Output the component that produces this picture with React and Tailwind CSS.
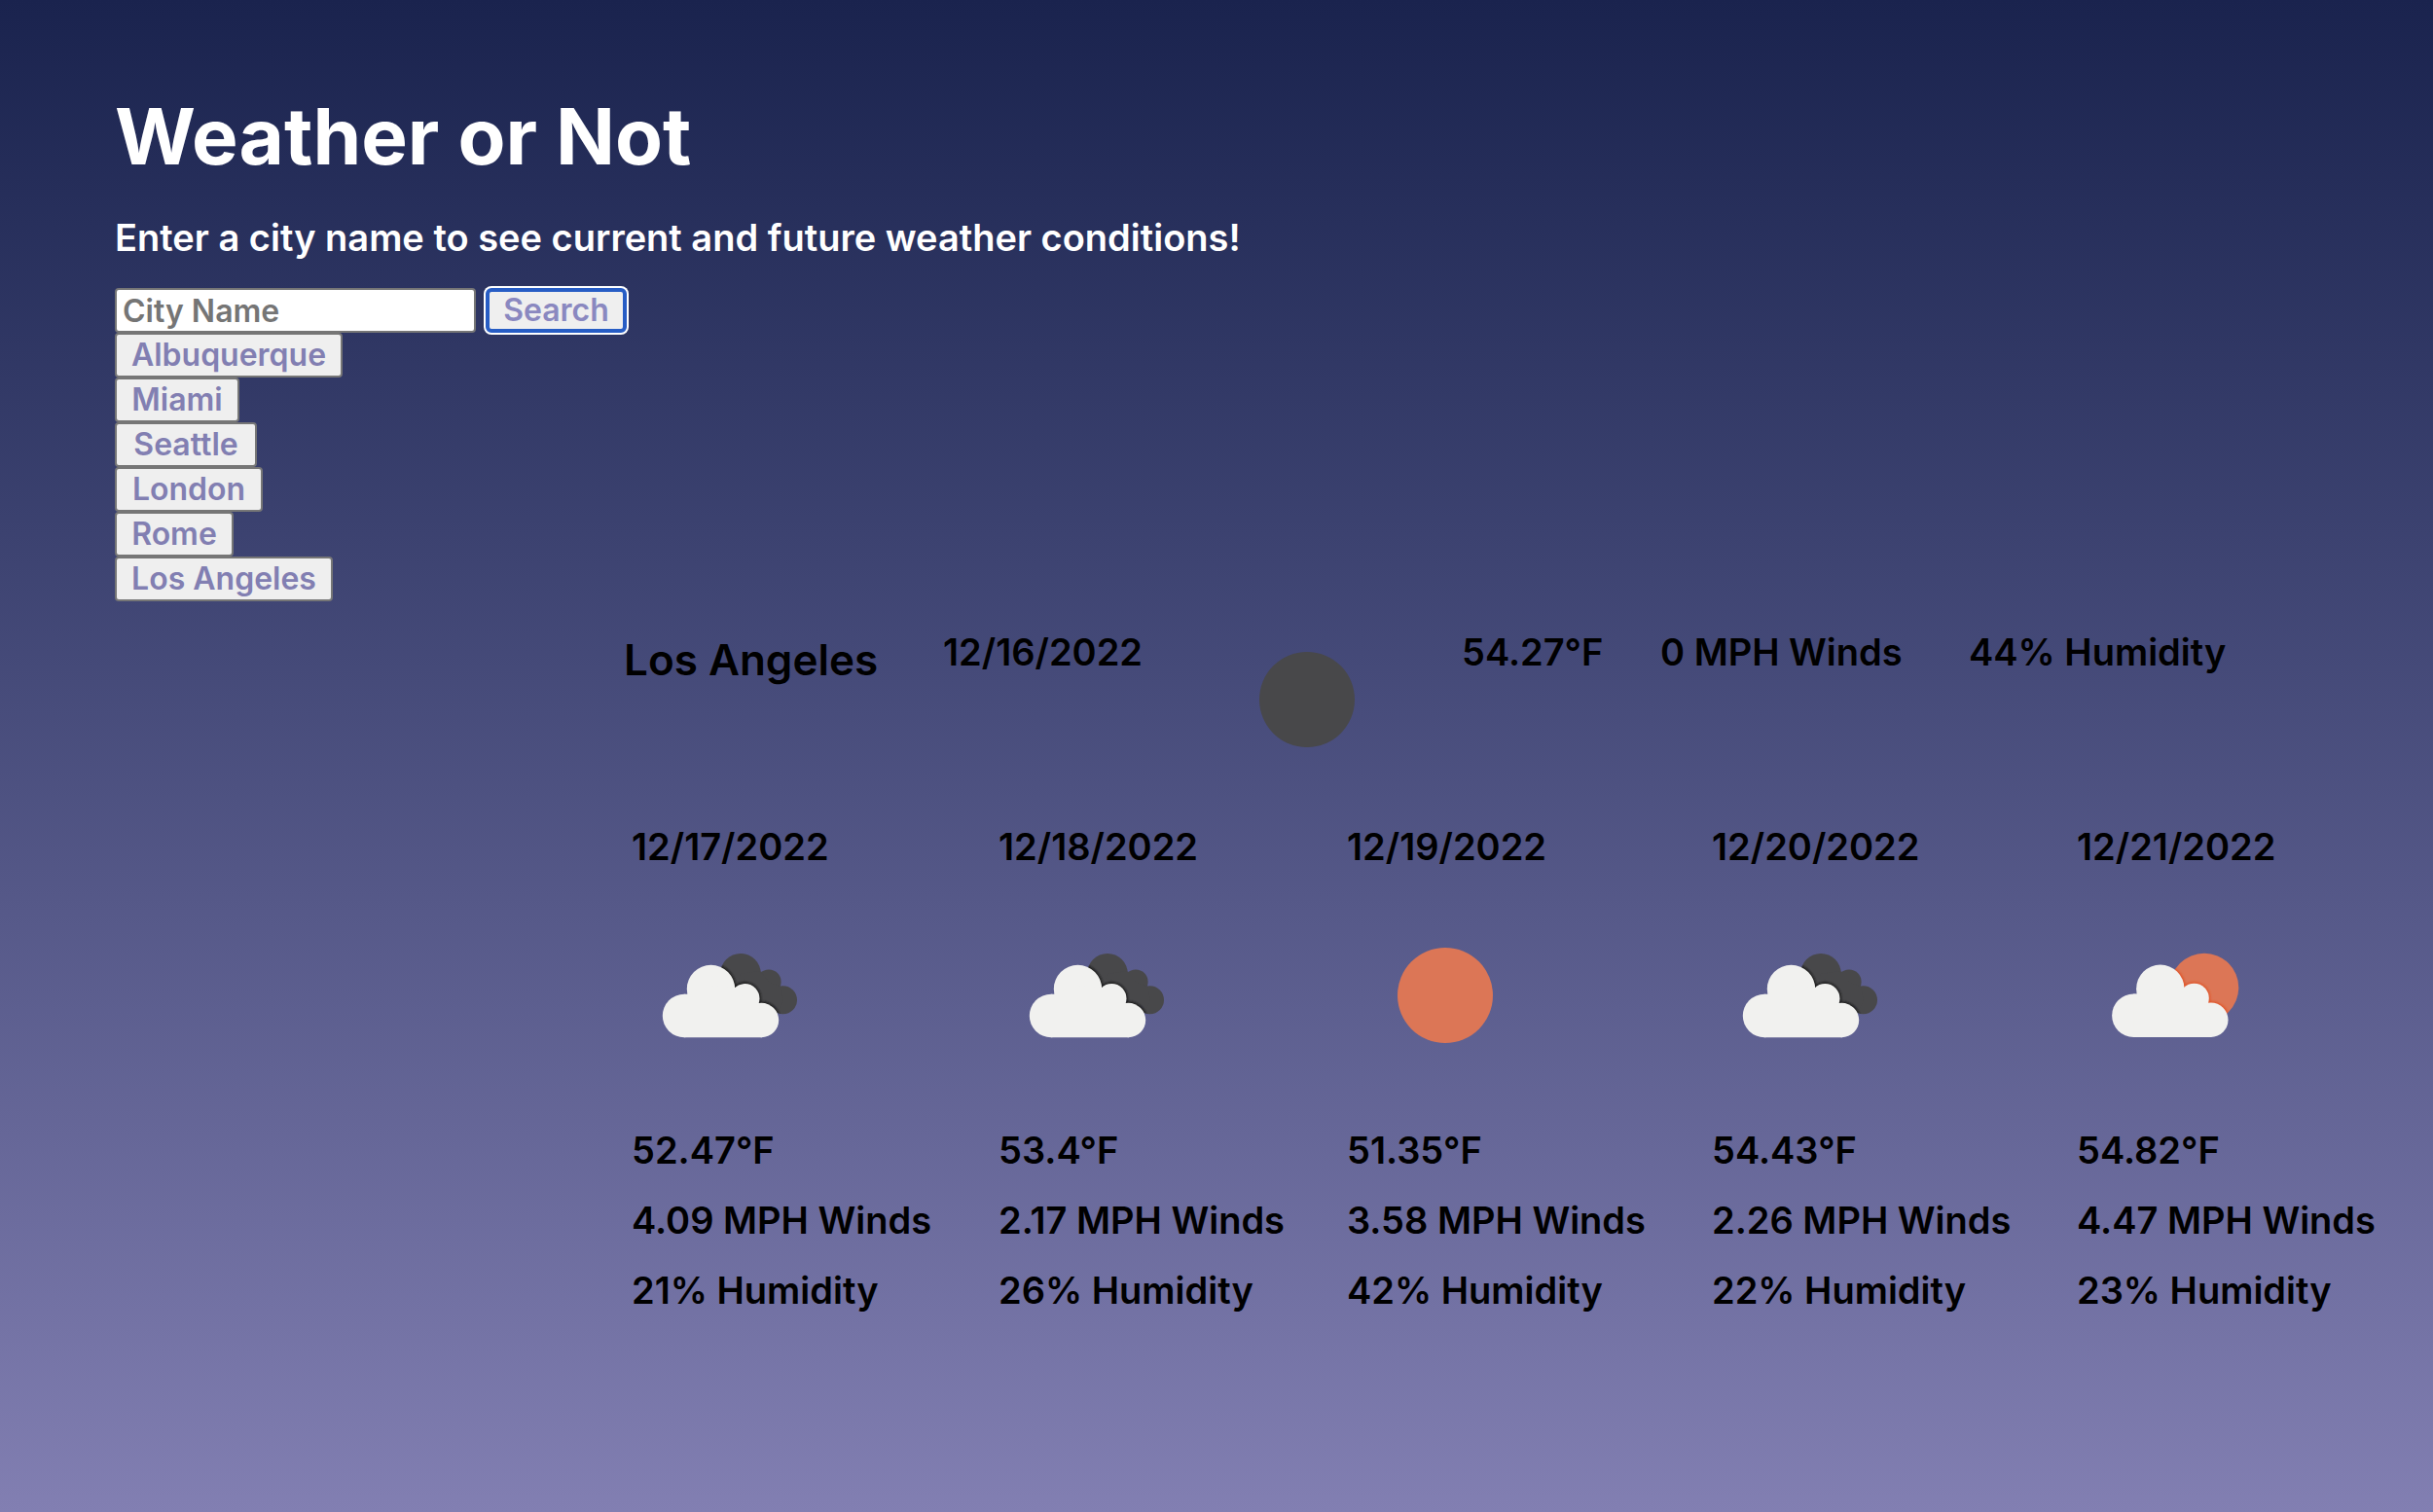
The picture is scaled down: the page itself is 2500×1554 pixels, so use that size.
import { useId } from "react";

const cities = [
  { name: "Albuquerque", width: "w-[234px]" },
  { name: "Miami", width: "w-[128px]" },
  { name: "Seattle", width: "w-[146px]" },
  { name: "London", width: "w-[152px]" },
  { name: "Rome", width: "w-[122px]" },
  { name: "Los Angeles", width: "w-[224px]" },
];

const forecast = [
  { date: "12/17/2022", icon: "clouds", temp: "52.47", wind: "4.09", humidity: 21 },
  { date: "12/18/2022", icon: "clouds", temp: "53.4", wind: "2.17", humidity: 26 },
  { date: "12/19/2022", icon: "sun", temp: "51.35", wind: "3.58", humidity: 42 },
  { date: "12/20/2022", icon: "clouds", temp: "54.43", wind: "2.26", humidity: 22 },
  { date: "12/21/2022", icon: "partly", temp: "54.82", wind: "4.47", humidity: 23 },
];

function Cloud() {
  return (
    <>
      <circle cx="54" cy="121" r="22.2" />
      <circle cx="81.5" cy="93.5" r="24.7" />
      <circle cx="116.3" cy="103.3" r="15.2" />
      <circle cx="133.5" cy="125.5" r="17.7" />
      <path d="M54 98.8H57L81 90L106 92L116 103L131 108L134 143.2H54Z" />
    </>
  );
}

function WeatherIcon({ kind }) {
  const id = useId();
  const box = "block size-[200px]";
  if (kind === "sun" || kind === "night") {
    return (
      <svg className={box} viewBox="0 -1 200 200" aria-hidden="true">
        <circle cx="101" cy="100" r="49" fill={kind === "sun" ? "#dc7656" : "#48484a"} />
      </svg>
    );
  }
  const partly = kind === "partly";
  const back = partly ? (
    <circle cx="131" cy="92" r="35.3" />
  ) : (
    <>
      <circle cx="112" cy="77.8" r="20.8" />
      <circle cx="141" cy="86" r="12.6" />
      <circle cx="155.5" cy="104.7" r="14.5" />
      <path d="M112 78L132 75L141 86L153 91L156 105L150 118L106 98Z" />
    </>
  );
  const shift = partly ? "translate(4.3 -0.3)" : undefined;
  return (
    <svg className={box} viewBox="0 -1 200 200" aria-hidden="true">
      <defs>
        <clipPath id={id}>{back}</clipPath>
        <filter id={`${id}-soft`}>
          <feGaussianBlur stdDeviation="1" />
        </filter>
      </defs>
      <g fill={partly ? "#dc7656" : "#48484a"}>{back}</g>
      <g clipPath={`url(#${id})`}>
        <g
          transform={shift}
          filter={`url(#${id}-soft)`}
          fill={partly ? "#e0562c" : "#1c1c1e"}
          stroke={partly ? "#e0562c" : "#1c1c1e"}
          strokeWidth="3"
        >
          <Cloud />
        </g>
      </g>
      <g transform={shift} fill="#f1f1ef">
        <Cloud />
      </g>
    </svg>
  );
}

export default function App() {
  return (
    <div className="min-h-screen overflow-hidden bg-linear-to-b from-[#1a234e] to-[#827fb2] font-['Inter',sans-serif] text-[38px] leading-[40px] font-semibold text-black">
      <header className="px-[118px] pt-[96px] text-white">
        <h1 className="text-[80px] leading-[88px] font-bold">Weather or Not</h1>
        <p className="mt-[40px]">
          Enter a city name to see current and future weather conditions!
        </p>
      </header>

      <section className="px-[118px] pt-[32px] text-[32px] leading-[42px]">
        <form className="flex gap-[10px]" onSubmit={(e) => e.preventDefault()}>
          <input
            type="text"
            aria-label="City Name"
            placeholder="City Name"
            className="h-[46px] w-[371px] rounded-[4px] border-2 border-[#767676] bg-white px-[6px] text-black placeholder:text-[#757575]"
          />
          <button
            type="submit"
            className="h-[46px] w-[145px] rounded-[6px] border-4 border-[#275dc5] bg-[#efefef] leading-[38px] text-[#8a88c0] ring-2 ring-white"
          >
            Search
          </button>
        </form>
        <ul>
          {cities.map((c) => (
            <li key={c.name} className="flex">
              <button
                type="button"
                className={`h-[46px] rounded-[4px] border-2 border-[#767676] bg-[#efefef] text-[#827fb2] ${c.width}`}
              >
                {c.name}
              </button>
            </li>
          ))}
        </ul>
      </section>

      <main className="whitespace-nowrap">
        <section className="ml-[641px] grid h-[200px] grid-cols-[328fr_273fr_260fr_204fr_317fr_477fr]">
          <h2 className="mt-[38px] text-[44px] leading-[44px]">Los Angeles</h2>
          <p className="mt-[32px]">12/16/2022</p>
          <WeatherIcon kind="night" />
          <p className="mt-[32px]">54.27°F</p>
          <p className="mt-[32px]">0 MPH Winds</p>
          <p className="mt-[32px]">44% Humidity</p>
        </section>

        <section className="ml-[649px] grid grid-cols-[377fr_358fr_375fr_375fr_366fr] pt-[32px] pb-16">
          {forecast.map((d) => (
            <article key={d.date} className="flex min-w-0 flex-col gap-[32px]">
              <p>{d.date}</p>
              <div className="pb-2">
                <WeatherIcon kind={d.icon} />
              </div>
              <p>{d.temp}°F</p>
              <p>{d.wind} MPH Winds</p>
              <p>{d.humidity}% Humidity</p>
            </article>
          ))}
        </section>
      </main>
    </div>
  );
}
